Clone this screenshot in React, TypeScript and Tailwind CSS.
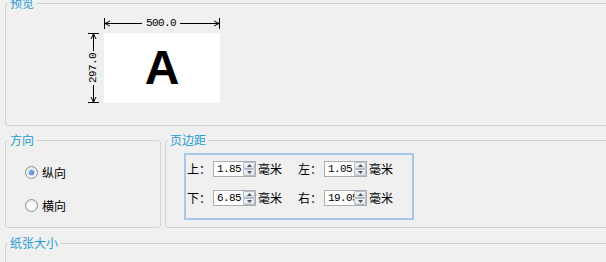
const label = "text-[12px] leading-[12px] text-[#1e9bd2] [font-family:'Noto_Sans_CJK_SC',sans-serif]";
const cjk = "[font-family:'Noto_Sans_CJK_SC',sans-serif]";
const mono = "[font-family:'Liberation_Mono',monospace] text-[11px] tracking-[-0.6px]";

function GroupBox({ title, className, children }: { title: string; className?: string; children?: React.ReactNode }) {
  return (
    <div className={`relative rounded-[3px] border border-[#d3d3d3] ${className ?? ""}`}>
      <span className={`absolute -top-[7px] left-[2px] bg-[#f0f0f0] px-[2px] ${label}`}>{title}</span>
      {children}
    </div>
  );
}

function HDim() {
  return (
    <div className="flex h-[11px] items-center">
      <svg width="38" height="11" className="shrink-0">
        <path d="M0.5 0V11M1 5.5H38M1 5.5L6 3M1 5.5L6 8" stroke="#000" fill="none" />
      </svg>
      <span className={`mx-[4px] w-[30px] text-center leading-[11px] text-black ${mono}`}>500.0</span>
      <svg width="40" height="11" className="shrink-0">
        <path d="M39.5 0V11M0 5.5H39M39 5.5L34 3M39 5.5L34 8" stroke="#000" fill="none" />
      </svg>
    </div>
  );
}

function VDim() {
  return (
    <div className="flex h-[70px] w-[11px] flex-col items-center">
      <svg width="11" height="18" className="shrink-0">
        <path d="M0 0.5H11M5.5 1V18M5.5 1L3 6M5.5 1L8 6" stroke="#000" fill="none" />
      </svg>
      <span className={`flex-1 rotate-180 text-center leading-[11px] text-black [writing-mode:vertical-rl] ${mono}`}>297.0</span>
      <svg width="11" height="18" className="shrink-0">
        <path d="M0 17.5H11M5.5 0V17M5.5 17L3 12M5.5 17L8 12" stroke="#000" fill="none" />
      </svg>
    </div>
  );
}

function Radio({ text, checked }: { text: string; checked?: boolean }) {
  return (
    <div className="flex h-[13px] items-center gap-[4px]">
      <span className="grid h-[13px] w-[13px] place-items-center rounded-full border border-[#8c8f94] bg-[radial-gradient(circle_at_50%_60%,#ffffff_30%,#dcdcdc_100%)]">
        {checked && (
          <span className="h-[5px] w-[5px] rounded-full bg-[radial-gradient(circle_at_40%_40%,#8fb6ea,#2f64b8)] shadow-[0_0_0_1px_#c5d8f2]" />
        )}
      </span>
      <span className={`text-[12px] leading-[13px] text-black ${cjk}`}>{text}</span>
    </div>
  );
}

function SpinBtn({ up }: { up?: boolean }) {
  return (
    <div className="flex h-[7px] items-center justify-center rounded-[1px] border border-[#b5bcc7] bg-gradient-to-b from-[#f6f7f9] to-[#dde2e8]">
      <svg width="5" height="3">
        <path d={up ? "M2.5 0L5 3H0Z" : "M0 0H5L2.5 3Z"} fill="#4d5561" />
      </svg>
    </div>
  );
}

function Spin({ value }: { value: string }) {
  return (
    <div className="flex h-[16px] w-[43px] border border-[#abadb3] bg-white">
      <div className={`min-w-0 flex-1 overflow-hidden whitespace-nowrap pl-[3px] leading-[14px] text-black ${mono}`}>{value}</div>
      <div className="flex w-[12px] flex-col">
        <SpinBtn up />
        <SpinBtn />
      </div>
    </div>
  );
}

function Margin({ name, value }: { name: string; value: string }) {
  return (
    <div className="flex items-center gap-[2px]">
      <span className={`w-[24px] text-[12px] leading-[16px] text-black ${cjk}`}>{name}</span>
      <Spin value={value} />
      <span className={`text-[12px] leading-[16px] text-black ${cjk}`}>毫米</span>
    </div>
  );
}

export default function App() {
  return (
    <div className="h-[262px] w-[606px] overflow-hidden bg-[#f0f0f0]">
      <div className="w-[640px] pl-[5px] pt-[3px]">
        <GroupBox title="预览" className="h-[123px]">
          <div className="ml-[82px] mt-[14px] grid grid-cols-[11px_116px] gap-x-[5px] gap-y-[4px]">
            <div />
            <HDim />
            <VDim />
            <div className="flex h-[70px] items-center justify-center bg-white">
              <span className="text-[48px] font-bold leading-none text-black [font-family:'Liberation_Sans',sans-serif]">A</span>
            </div>
          </div>
        </GroupBox>

        <div className="mt-[14px] flex gap-[4px]">
          <GroupBox title="方向" className="h-[88px] w-[156px] shrink-0">
            <div className="ml-[19px] mt-[25px] flex flex-col gap-[20px]">
              <Radio text="纵向" checked />
              <Radio text="横向" />
            </div>
          </GroupBox>
          <GroupBox title="页边距" className="h-[88px] flex-1">
            <div className="ml-[18px] mt-[12px] h-[67px] w-[230px] border-2 border-[#a6c8ea] pl-[1px] pt-[6px]">
              <div className="grid grid-cols-[auto_auto] justify-start gap-x-[16px] gap-y-[13px]">
                <Margin name="上：" value="1.85" />
                <Margin name="左：" value="1.05" />
                <Margin name="下：" value="6.85" />
                <Margin name="右：" value="19.05" />
              </div>
            </div>
          </GroupBox>
        </div>

        <GroupBox title="纸张大小" className="mt-[15px] h-[60px]" />
      </div>
    </div>
  );
}
